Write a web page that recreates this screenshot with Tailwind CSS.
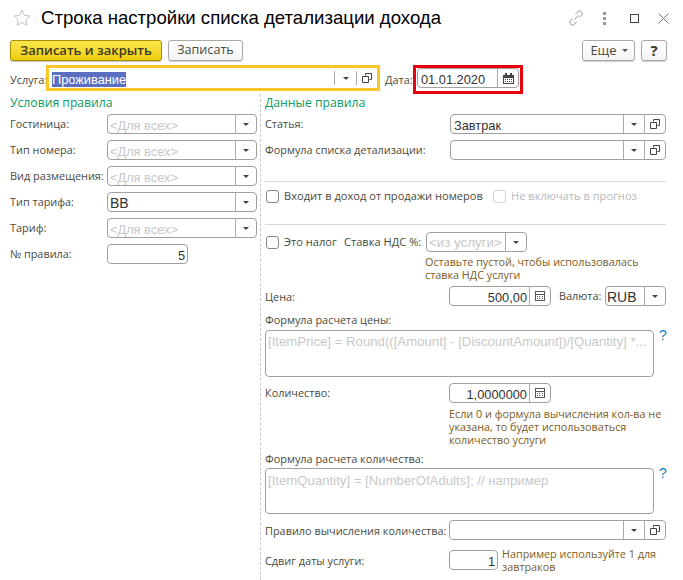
<!DOCTYPE html>
<html lang="ru"><head><meta charset="utf-8"><script src="https://cdn.jsdelivr.net/npm/@tailwindcss/browser@4"></script></head>
<body class="bg-white w-[683px] h-[580px] overflow-hidden font-['Open_Sans',sans-serif] text-[10.9px] text-[#4a4a3c] whitespace-nowrap">
<!-- title -->
<div class="flex items-center h-[36px] pl-[13px] pr-[14px]">
  <svg class="w-[18px] h-[18px] shrink-0" viewBox="0 0 18 18" fill="none" stroke="#c4c4c4" stroke-width="1"><path d="M9 1.2l2.3 5.2 5.6.6-4.2 3.7 1.2 5.6L9 13.4l-4.9 2.9 1.2-5.6L1.1 7l5.6-.6z"/></svg>
  <div class="ml-[10px] flex-1 font-['Liberation_Sans',sans-serif] text-[18.6px] text-black leading-none">Строка настройки списка детализации дохода</div>
  <svg class="w-[18px] h-[18px] mr-[18px]" viewBox="0 0 18 18" fill="none" stroke="#9a9a9a" stroke-width="1"><path d="M7.5 10.5l4-4M8.5 5l2-2.2a2.6 2.6 0 0 1 4 3.600L12.500 8.500M9.500 13l-2 2.200a2.600 2.600 0 0 1-4-3.600L5.500 9.500"/></svg>
  <div class="flex flex-col gap-[2px] mr-[24px]"><i class="w-[3px] h-[3px] bg-[#9a9a9a] block"></i><i class="w-[3px] h-[3px] bg-[#9a9a9a] block"></i><i class="w-[3px] h-[3px] bg-[#9a9a9a] block"></i></div>
  <div class="w-[9px] h-[9px] border border-[#444] mr-[19px]"></div>
  <svg class="w-[11px] h-[11px]" viewBox="0 0 11 11" stroke="#777" stroke-width="1"><path d="M.5.500l10 10M10.500.500l-10 10"/></svg>
</div>
<!-- toolbar -->
<div class="flex items-start h-[25px] mt-[4px] pl-[10px] pr-[16px]">
  <div class="w-[152px] h-[21px] rounded-[3px] border border-[#a89000] bg-gradient-to-b from-[#fbe64a] to-[#f0cd00] shadow-[0_1px_1px_rgba(0,0,0,.25)] flex items-center justify-center text-[13px] font-semibold text-[#3a3a20]">Записать и закрыть</div>
  <div class="ml-[6px] w-[75px] h-[21px] rounded-[3px] border border-[#a9a9a9] bg-gradient-to-b from-white to-[#f3f3f3] shadow-[0_1px_1px_rgba(0,0,0,.2)] flex items-center justify-center text-[12.6px] text-[#4a4a3c]">Записать</div>
  <div class="ml-auto w-[53px] h-[21px] rounded-[3px] border border-[#a9a9a9] bg-gradient-to-b from-white to-[#f3f3f3] shadow-[0_1px_1px_rgba(0,0,0,.2)] flex items-center justify-center gap-[5px] pl-[1px] text-[13px]">Еще <i class="block border-x-[3px] border-x-transparent border-t-[3px] border-t-[#555]"></i></div>
  <div class="ml-[6px] w-[26px] h-[21px] rounded-[3px] border border-[#a9a9a9] bg-gradient-to-b from-white to-[#f3f3f3] shadow-[0_1px_1px_rgba(0,0,0,.2)] flex items-center justify-center text-[15px] font-bold text-[#333]">?</div>
</div>
<!-- service row -->
<div class="flex h-[29px] pl-[10px]">
  <div class="w-[36px] pt-[7px]">Услуга:</div>
  <div class="w-[334px] h-[26px] border-[3px] border-[#fbc62a] flex items-stretch font-['Liberation_Sans',sans-serif] text-[12.8px] text-[#333]">
    <div class="flex-1 pl-[3px] pt-[2px]"><span class="bg-[#5a6fc2] text-white leading-[15px] inline-block">Проживание</span></div>
    <div class="w-[22px] my-[3px] border-l border-[#aaa] flex items-center justify-center"><i class="block border-x-[3px] border-x-transparent border-t-[3px] border-t-[#444]"></i></div>
    <div class="w-[21px] my-[3px] border-l border-[#aaa] flex items-center justify-center"><svg class="w-[10px] h-[10px]" viewBox="0 0 10 10" fill="none" stroke="#444"><path d="M3.500 2.500V.500h6v6h-2M.500 3.500h6v6h-6z"/></svg></div>
  </div>
  <div class="ml-[5px] pt-[7px] w-[28px]">Дата:</div>
  <div class="w-[110px] h-[29px] border-[3px] border-[#e8000d] pl-px flex items-start">
    <div class="w-[102px] h-[20px] rounded-[4px] border border-[#a0a0a0] flex font-['Liberation_Sans',sans-serif] text-[12.8px] text-[#333]">
      <div class="flex-1 pl-[3px] leading-[21px]">01.01.2020</div>
      <div class="w-[21px] border-l border-[#aaa] flex items-center justify-center"><svg class="w-[11px] h-[11px]" viewBox="0 0 11 11" fill="#444"><path d="M0 2h11v9H0zM1 5v5h9V5z" fill-rule="evenodd"/><path d="M2 0h2v2H2zM7 0h2v2H7zM2 6h1v1H2zM4 6h1v1H4zM6 6h1v1H6zM8 6h1v1H8zM2 8h1v1H2zM4 8h1v1H4zM6 8h1v1H6zM8 8h1v1H8z"/></svg></div>
    </div>
  </div>
</div>
<!-- columns -->
<div class="flex h-[486px] pl-[10px]">
  <!-- left -->
  <div class="w-[250px] shrink-0">
    <div class="h-[20px] text-[12.2px] text-[#0a9b63] leading-[18px]">Условия правила</div>
    <div class="flex flex-col gap-[6px]">
      <div class="flex h-[20px]"><div class="w-[97px] leading-[19px]">Гостиница:</div><div class="w-[150px] rounded-[4px] border border-[#a0a0a0] flex font-['Liberation_Sans',sans-serif] text-[12.8px] text-[#c8c8c8]"><div class="flex-1 pl-[2px] leading-[21px]">&lt;Для всех&gt;</div><div class="w-[21px] border-l border-[#aaa] flex items-center justify-center"><i class="block border-x-[3px] border-x-transparent border-t-[3px] border-t-[#444]"></i></div></div></div>
      <div class="flex h-[20px]"><div class="w-[97px] leading-[19px]">Тип номера:</div><div class="w-[150px] rounded-[4px] border border-[#a0a0a0] flex font-['Liberation_Sans',sans-serif] text-[12.8px] text-[#c8c8c8]"><div class="flex-1 pl-[2px] leading-[21px]">&lt;Для всех&gt;</div><div class="w-[21px] border-l border-[#aaa] flex items-center justify-center"><i class="block border-x-[3px] border-x-transparent border-t-[3px] border-t-[#444]"></i></div></div></div>
      <div class="flex h-[20px]"><div class="w-[97px] leading-[19px]">Вид размещения:</div><div class="w-[150px] rounded-[4px] border border-[#a0a0a0] flex font-['Liberation_Sans',sans-serif] text-[12.8px] text-[#c8c8c8]"><div class="flex-1 pl-[2px] leading-[21px]">&lt;Для всех&gt;</div><div class="w-[21px] border-l border-[#aaa] flex items-center justify-center"><i class="block border-x-[3px] border-x-transparent border-t-[3px] border-t-[#444]"></i></div></div></div>
      <div class="flex h-[20px]"><div class="w-[97px] leading-[19px]">Тип тарифа:</div><div class="w-[150px] rounded-[4px] border border-[#a0a0a0] flex font-['Liberation_Sans',sans-serif] text-[14px] text-[#333]"><div class="flex-1 pl-[2px] leading-[21px]">BB</div><div class="w-[21px] border-l border-[#aaa] flex items-center justify-center"><i class="block border-x-[3px] border-x-transparent border-t-[3px] border-t-[#444]"></i></div></div></div>
      <div class="flex h-[20px]"><div class="w-[97px] leading-[19px]">Тариф:</div><div class="w-[150px] rounded-[4px] border border-[#a0a0a0] flex font-['Liberation_Sans',sans-serif] text-[12.8px] text-[#c8c8c8]"><div class="flex-1 pl-[2px] leading-[21px]">&lt;Для всех&gt;</div><div class="w-[21px] border-l border-[#aaa] flex items-center justify-center"><i class="block border-x-[3px] border-x-transparent border-t-[3px] border-t-[#444]"></i></div></div></div>
      <div class="flex h-[20px]"><div class="w-[97px] leading-[19px]">№ правила:</div><div class="w-[81px] rounded-[4px] border border-[#a0a0a0] font-['Liberation_Sans',sans-serif] text-[12.8px] text-[#333] text-right pr-[2px] leading-[21px]">5</div></div>
    </div>
  </div>
  <!-- right -->
  <div class="w-[407px] pl-[4px] border-l border-dashed border-[#c8c8c8]">
    <div class="h-[20px] text-[12.2px] text-[#0a9b63] leading-[18px]">Данные правила</div>
    <div class="flex h-[20px]"><div class="w-[185px] leading-[19px]">Статья:</div><div class="w-[216px] rounded-[4px] border border-[#a0a0a0] flex font-['Liberation_Sans',sans-serif] text-[12.8px] text-[#333]"><div class="flex-1 pl-[3px] leading-[21px]">Завтрак</div><div class="w-[21px] border-l border-[#aaa] flex items-center justify-center"><i class="block border-x-[3px] border-x-transparent border-t-[3px] border-t-[#444]"></i></div><div class="w-[21px] border-l border-[#aaa] flex items-center justify-center"><svg class="w-[10px] h-[10px]" viewBox="0 0 10 10" fill="none" stroke="#444"><path d="M3.500 2.500V.500h6v6h-2M.500 3.500h6v6h-6z"/></svg></div></div></div>
    <div class="flex h-[20px] mt-[6px]"><div class="w-[185px] leading-[19px]">Формула списка детализации:</div><div class="w-[216px] rounded-[4px] border border-[#a0a0a0] flex"><div class="flex-1"></div><div class="w-[21px] border-l border-[#aaa] flex items-center justify-center"><i class="block border-x-[3px] border-x-transparent border-t-[3px] border-t-[#444]"></i></div><div class="w-[21px] border-l border-[#aaa] flex items-center justify-center"><svg class="w-[10px] h-[10px]" viewBox="0 0 10 10" fill="none" stroke="#444"><path d="M3.500 2.500V.500h6v6h-2M.500 3.500h6v6h-6z"/></svg></div></div></div>
    <div class="h-px w-[401px] bg-[#d9d9d9] mt-[21px]"></div>
    <div class="flex items-center h-[13px] mt-[8px] ml-[1px] text-[11.1px]">
      <i class="block w-[13px] h-[13px] rounded-[3px] border border-[#888]"></i><span class="ml-[5px] w-[209px]">Входит в доход от продажи номеров</span>
      <i class="block w-[13px] h-[13px] rounded-[3px] border border-[#d4d4d4]"></i><span class="ml-[5px] text-[#b8b8b8]">Не включать в прогноз</span>
    </div>
    <div class="h-px w-[401px] bg-[#d9d9d9] mt-[21px]"></div>
    <div class="flex items-center h-[20px] mt-[7px] ml-[1px] text-[11.1px]">
      <i class="block w-[13px] h-[13px] rounded-[3px] border border-[#888]"></i><span class="ml-[5px] w-[60px]">Это налог</span>
      <span class="w-[82px]">Ставка НДС %:</span>
      <div class="w-[101px] h-[20px] rounded-[4px] border border-[#a0a0a0] flex font-['Liberation_Sans',sans-serif] text-[13.3px] text-[#c8c8c8]"><div class="flex-1 pl-[2px] leading-[20px]">&lt;из услуги&gt;</div><div class="w-[21px] border-l border-[#aaa] flex items-center justify-center"><i class="block border-x-[3px] border-x-transparent border-t-[3px] border-t-[#444]"></i></div></div>
    </div>
    <div class="ml-[160px] mt-[3px] text-[10.8px] leading-[13px] text-[#7a5c1e]">Оставьте пустой, чтобы использовалась<br>ставка НДС услуги</div>
    <div class="flex h-[20px] mt-[5px]"><div class="w-[184px] leading-[21px]">Цена:</div>
      <div class="w-[102px] rounded-[4px] border border-[#a0a0a0] flex font-['Liberation_Sans',sans-serif] text-[12.8px] text-[#333]"><div class="flex-1 text-right pr-[2px] leading-[21px]">500,00</div><div class="w-[21px] border-l border-[#aaa] flex items-center justify-center"><svg class="w-[10px] h-[10px]" viewBox="0 0 10 10" fill="#555"><path fill-rule="evenodd" d="M0 0h10v10H0zM1 1v2h8V1zM1 4v5h8V4z"/><path d="M2 5h1v1H2zM4 5h1v1H4zM7 5h1v1H7zM2 7h1v1H2zM4 7h1v1H4zM7 7h1v1H7z"/></svg></div></div>
      <div class="ml-[8px] w-[46px] leading-[19px]">Валюта:</div>
      <div class="w-[61px] rounded-[4px] border border-[#a0a0a0] flex font-['Liberation_Sans',sans-serif] text-[14px] text-[#333]"><div class="flex-1 pl-[1px] leading-[21px]">RUB</div><div class="w-[21px] border-l border-[#aaa] flex items-center justify-center"><i class="block border-x-[3px] border-x-transparent border-t-[3px] border-t-[#444]"></i></div></div>
    </div>
    <div class="h-[16px] mt-[6px] leading-[16px]">Формула расчета цены:</div>
    <div class="flex mt-[2px]"><div class="w-[389px] h-[47px] rounded-[4px] border border-[#a0a0a0] font-['Liberation_Sans',sans-serif] text-[13.2px] text-[#c8c8c8] pl-[2px] leading-[22px]">[ItemPrice] = Round(([Amount] - [DiscountAmount])/[Quantity] *...</div><div class="ml-[5px] -mt-[2px] text-[14px] font-['Liberation_Sans',sans-serif] text-[#1a7fb8] leading-[14px]">?</div></div>
    <div class="flex h-[20px] mt-[6px]"><div class="w-[184px] leading-[19px]">Количество:</div>
      <div class="w-[102px] rounded-[4px] border border-[#a0a0a0] flex font-['Liberation_Sans',sans-serif] text-[12.8px] text-[#333]"><div class="flex-1 text-right pr-[2px] leading-[21px]">1,0000000</div><div class="w-[21px] border-l border-[#aaa] flex items-center justify-center"><svg class="w-[10px] h-[10px]" viewBox="0 0 10 10" fill="#555"><path fill-rule="evenodd" d="M0 0h10v10H0zM1 1v2h8V1zM1 4v5h8V4z"/><path d="M2 5h1v1H2zM4 5h1v1H4zM7 5h1v1H7zM2 7h1v1H2zM4 7h1v1H4zM7 7h1v1H7z"/></svg></div></div>
    </div>
    <div class="ml-[184px] mt-[4px] text-[10.8px] leading-[13px] text-[#7a5c1e]">Если 0 и формула вычисления кол-ва не<br>указана, то будет использоваться<br>количество услуги</div>
    <div class="h-[16px] mt-[5px] leading-[16px]">Формула расчета количества:</div>
    <div class="flex mt-[1px]"><div class="w-[389px] h-[46px] rounded-[4px] border border-[#a0a0a0] font-['Liberation_Sans',sans-serif] text-[13.2px] text-[#c8c8c8] pl-[2px] leading-[24px]">[ItemQuantity] = [NumberOfAdults]; // например</div><div class="ml-[5px] -mt-[2px] text-[14px] font-['Liberation_Sans',sans-serif] text-[#1a7fb8] leading-[14px]">?</div></div>
    <div class="flex h-[20px] mt-[6px]"><div class="w-[184px] leading-[21px]">Правило вычисления количества:</div><div class="w-[217px] rounded-[4px] border border-[#a0a0a0] flex"><div class="flex-1"></div><div class="w-[21px] border-l border-[#aaa] flex items-center justify-center"><i class="block border-x-[3px] border-x-transparent border-t-[3px] border-t-[#444]"></i></div><div class="w-[21px] border-l border-[#aaa] flex items-center justify-center"><svg class="w-[10px] h-[10px]" viewBox="0 0 10 10" fill="none" stroke="#444"><path d="M3.500 2.500V.500h6v6h-2M.500 3.500h6v6h-6z"/></svg></div></div></div>
    <div class="flex h-[20px] mt-[10px]"><div class="w-[184px] leading-[21px]">Сдвиг даты услуги:</div><div class="w-[49px] rounded-[4px] border border-[#a0a0a0] font-['Liberation_Sans',sans-serif] text-[12.8px] text-[#333] text-right pr-[2px] leading-[21px]">1</div><div class="ml-[4px] -mt-[3px] text-[10.8px] leading-[13px] text-[#7a5c1e]">Например используйте 1 для<br>завтраков</div></div>
  </div>
</div>
</body></html>
